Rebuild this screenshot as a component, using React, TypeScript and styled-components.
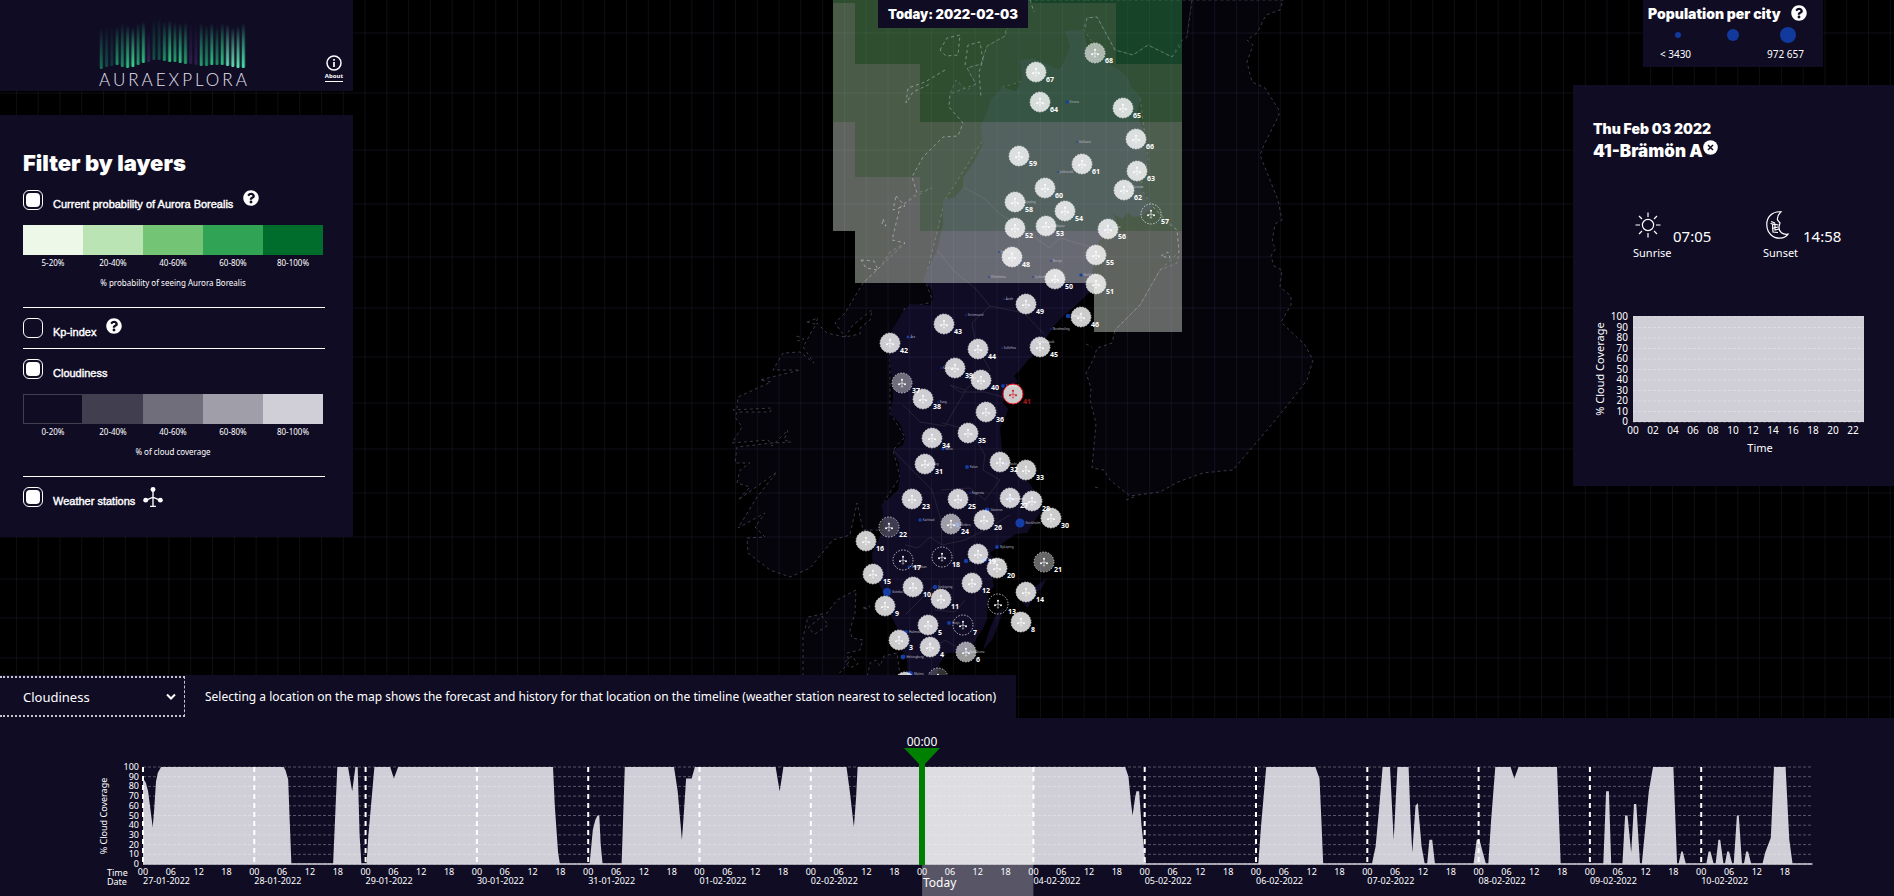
import React from "react";
import styled, { createGlobalStyle } from "styled-components";
import { FaQuestionCircle } from "react-icons/fa";

const NAVY = "#0f0c24";
const BODY = '"Noto Sans", "Open Sans", sans-serif';
const HEAVY = 'Inter, "Liberation Sans", sans-serif';

const GlobalStyle = createGlobalStyle`
  *, *::before { box-sizing: border-box; }
  body {
    margin: 0;
    background: #000;
    color: #fff;
    font-family: ${BODY};
    font-size: 12px;
  }
  h1, h2, p { margin: 0; }
`;

/* ---------- page structure ---------- */

const Page = styled.div`
  position: relative;
  display: flex;
  flex-direction: column;
  min-height: 100vh;
  overflow: hidden;
`;

const MapLayer = styled.svg`
  position: absolute;
  inset: 0;
  width: 100%;
  height: 100%;
`;

const Top = styled.div`
  position: relative;
  flex: 1;
  display: grid;
  grid-template-columns: 353px 1fr 321px;
  align-items: start;
  padding-bottom: 24px;
`;

const LeftColumn = styled.div`
  display: flex;
  flex-direction: column;
  gap: 24px;
`;

const MiddleColumn = styled.div`
  display: flex;
  justify-content: center;
  padding-right: 20px;
`;

const RightColumn = styled.div`
  display: flex;
  flex-direction: column;
  gap: 18px;
`;

const TodayBox = styled.h1`
  padding: 0 10px;
  background: ${NAVY};
  font: 900 13px/28px ${HEAVY};
  white-space: nowrap;
`;

/* ---------- header ---------- */

const Header = styled.header`
  display: grid;
  grid-template-columns: 1fr auto;
  align-items: end;
  height: 91px;
  padding: 0 10px 0 99px;
  background: ${NAVY};
`;

const Brand = styled.div`
  display: flex;
  flex-direction: column;
  align-items: flex-start;
  padding-bottom: 2px;
`;

const BrandName = styled.span`
  font: 300 17px/18px Lato, sans-serif;
  letter-spacing: 3px;
  color: #e4e2ee;
`;

const AboutLink = styled.a`
  display: flex;
  flex-direction: column;
  align-items: center;
  margin-bottom: 9px;
  color: #fff;
  font-size: 6px;
  font-weight: 700;
  line-height: 10px;
  text-decoration: none;

  span { border-bottom: 1px solid #fff; }
`;

/* ---------- filter panel ---------- */

const FilterPanel = styled.section`
  padding: 32px 28px 20px 23px;
  background: ${NAVY};
`;

const FilterTitle = styled.h2`
  margin-bottom: 1px;
  font: 900 22px/32px ${HEAVY};
`;

const Layer = styled.div<{ $divided?: boolean }>`
  padding: 10px 0;
  border-top: ${(p) => (p.$divided ? "1px solid #fff" : "0")};
`;

const LayerRow = styled.div`
  display: flex;
  gap: 10px;
  height: 20px;
`;

const Check = styled.input`
  appearance: none;
  display: grid;
  place-items: center;
  width: 20px;
  height: 20px;
  margin: 0;
  border: 1px solid #fff;
  border-radius: 6px;

  &:checked::before {
    content: "";
    width: 14px;
    height: 14px;
    border-radius: 4px;
    background: #fff;
  }
`;

const LayerLabel = styled.label`
  align-self: flex-end;
  font: 11px/12px "Liberation Sans", Arial, sans-serif;
  -webkit-text-stroke: 0.4px #fff;
`;

const IconButton = styled.button`
  display: inline-flex;
  align-self: flex-start;
  padding: 0;
  border: 0;
  background: none;
  color: #fff;
  cursor: pointer;
`;

const StationMark = styled.svg`
  margin-left: -2px;
`;

const Legend = styled.ol`
  display: grid;
  grid-template-columns: repeat(5, 60px);
  margin: 15px 0 4px;
  padding: 0;
  list-style: none;
`;

const LegendItem = styled.li<{ $color: string; $outlined?: boolean }>`
  font-size: 8px;
  line-height: 16px;
  text-align: center;

  &::before {
    content: "";
    display: block;
    height: 30px;
    background: ${(p) => p.$color};
    border: ${(p) => (p.$outlined ? "1px solid #413e50" : "0")};
  }
`;

const LegendCaption = styled.p`
  width: 300px;
  margin-bottom: 6px;
  font-size: 8px;
  line-height: 16px;
  text-align: center;
`;

/* ---------- right-hand panels ---------- */

const PopulationPanel = styled.section`
  width: 180px;
  height: 67px;
  margin-left: 70px;
  padding: 5px;
  background: ${NAVY};
`;

const PopulationTitle = styled.div`
  display: flex;
  align-items: center;
  gap: 10px;

  h2 { font: 900 14px/18px ${HEAVY}; white-space: nowrap; }
`;

const PopulationScale = styled.div`
  display: grid;
  grid-template-columns: repeat(3, 55px);
  justify-items: center;
  align-items: center;
  font-size: 10px;
  line-height: 14px;
  white-space: nowrap;
`;

const Dot = styled.span<{ $size: number }>`
  width: ${(p) => p.$size}px;
  height: ${(p) => p.$size}px;
  border-radius: 50%;
  background: #113a9c;
`;

const DotRow = styled(PopulationScale)`
  height: 24px;
  margin-left: 2px;
`;

const StationPanel = styled.section`
  padding: 33px 0 19px;
  background: ${NAVY};
`;

const StationTitle = styled.div`
  display: flex;
  padding-left: 20px;
  font: 900 17px/22px ${HEAVY};
`;

const StationDate = styled.p`
  padding-left: 20px;
  font: 900 14px/22px ${HEAVY};
`;

const SunTimes = styled.div`
  display: grid;
  grid-template-columns: 130px 1fr;
  padding: 49px 0 46px 60px;
`;

const SunTime = styled.div`
  font-size: 11px;
  line-height: 16px;
`;

const SunTimeValue = styled.div`
  display: flex;
  align-items: flex-end;
  gap: 10px;
  font-size: 15px;
  line-height: 18px;

  svg { margin-bottom: 6px; }
`;

const FluidSvg = styled.svg`
  display: block;
  width: 100%;
  height: auto;
`;

/* ---------- bottom ---------- */

const Bottom = styled.div`
  position: relative;
`;

const InfoBar = styled.div`
  display: flex;
  align-items: center;
  width: fit-content;
  height: 43px;
  padding-right: 20px;
  background: ${NAVY};
`;

const SelectBox = styled.div`
  display: grid;
  grid-template-columns: 1fr 18px;
  align-items: center;
  width: 185px;
  height: 41px;
  margin-right: 20px;
  border-color: #c4c3cc;
  border-style: dotted dashed dotted none;
  border-width: 2px 1px 2px 0;

  svg { grid-area: 1 / 2; pointer-events: none; }
`;

const Select = styled.select`
  appearance: none;
  grid-area: 1 / 1 / 2 / 3;
  height: 37px;
  padding: 0 23px;
  border: 0;
  background: transparent;
  color: #fff;
  font: 13px/18px ${BODY};

  option { background: ${NAVY}; }
`;

const InfoText = styled.p`
  font-size: 12px;
  line-height: 18px;
`;

const Timeline = styled.section`
  background: ${NAVY};
`;

/* ---------- map data ---------- */

type Station = [id: number, x: number, y: number, cover?: number];

const STATIONS: Station[] = [
  [68, 1095, 53, 0.6], [67, 1036, 72], [64, 1040, 102], [65, 1123, 108], [66, 1136, 139],
  [59, 1019, 156], [61, 1082, 164], [63, 1137, 171], [62, 1124, 190], [60, 1045, 188],
  [58, 1015, 202], [54, 1065, 211], [52, 1015, 228], [53, 1046, 226], [57, 1151, 214, 0],
  [56, 1108, 229], [48, 1012, 257], [55, 1096, 255], [50, 1055, 279], [51, 1096, 284],
  [49, 1026, 304], [46, 1081, 317], [43, 944, 324], [42, 890, 343], [44, 978, 349],
  [45, 1040, 347], [39, 955, 368], [40, 981, 380], [41, 1013, 394], [37, 902, 383, 0.4],
  [38, 923, 399], [36, 986, 412], [35, 968, 433], [34, 932, 438], [31, 925, 464],
  [32, 1000, 462], [33, 1026, 470], [23, 912, 499], [25, 958, 499], [27, 1010, 498],
  [28, 1032, 501], [22, 889, 527, 0.2], [24, 951, 524, 0.6], [26, 984, 520], [30, 1051, 518],
  [16, 866, 541], [17, 903, 560, 0], [18, 942, 557, 0], [19, 978, 554], [20, 997, 568],
  [21, 1044, 562, 0.4], [15, 873, 574], [10, 913, 587], [12, 972, 583], [11, 941, 599],
  [13, 998, 604, 0], [14, 1026, 592], [9, 885, 606], [5, 928, 625], [7, 963, 625, 0],
  [8, 1021, 622], [3, 899, 640], [4, 930, 647], [6, 966, 652, 0.6], [1, 905, 682],
  [2, 938, 678, 0.2],
];

type City = [name: string, x: number, y: number, r: number];

const CITIES: City[] = [
  ["Kiruna", 1067, 102, 1.6], ["Gällivare", 1077, 142, 0.8], ["Jokkmokk", 1058, 172, 0.8],
  ["Arjeplog", 1022, 202, 0.8], ["Haparanda", 1126, 187, 0.8], ["Luleå", 1110, 227, 1.8],
  ["Arvidsjaur", 1049, 226, 0.8], ["Storuman", 999, 252, 0.8], ["Norsjö", 1051, 261, 0.8],
  ["Vilhelmina", 989, 277, 0.8], ["Lycksele", 1033, 277, 0.8], ["Skellefteå", 1081, 275, 1.6],
  ["Åsele", 1004, 299, 0.8], ["Strömsund", 966, 315, 0.8], ["Umeå", 1068, 316, 2.2],
  ["Nordmaling", 1051, 329, 0.8], ["Åre", 908, 337, 1.4], ["Sollefteå", 1002, 348, 0.8],
  ["Örnsköldsvik", 1034, 342, 1.2], ["Krokom", 941, 368, 0.8], ["Ånge", 967, 378, 0.8],
  ["Sundsvall", 1003, 386, 2], ["Sveg", 938, 402, 0.8], ["Mora", 943, 449, 1.4],
  ["Malung", 926, 464, 0.8], ["Falun", 967, 467, 2], ["Gävle", 1006, 464, 1.8],
  ["Fagersta", 970, 493, 0.8], ["Västerås", 987, 510, 2.4], ["Karlstad", 920, 520, 1.8],
  ["Örebro", 957, 525, 2.4], ["Uppsala", 1010, 499, 2.4], ["Stockholm", 1020, 523, 4.6],
  ["Nyköping", 997, 547, 2], ["Linköping", 966, 561, 2.2], ["Norrköping", 985, 560, 2],
  ["Trollhättan", 909, 567, 1.4], ["Jönköping", 935, 587, 2.2], ["Göteborg", 887, 592, 4],
  ["Växjö", 949, 623, 2], ["Halmstad", 906, 632, 2], ["Helsingborg", 903, 657, 2.4],
  ["Karlskrona", 967, 652, 1.4], ["Malmö", 910, 674, 3],
];

/* [x, y, width, height, colour] */
const AURORA: [number, number, number, number, string][] = [
  [833, 0, 196, 3, "#74c476"], [1029, 0, 87, 3, "#31a354"], [1116, 0, 66, 64, "#31a354"],
  [833, 3, 22, 61, "#bae4b3"], [855, 3, 261, 61, "#74c476"],
  [833, 64, 87, 58, "#bae4b3"], [920, 64, 262, 58, "#74c476"],
  [833, 122, 22, 55, "#edf8e9"], [855, 122, 327, 55, "#bae4b3"],
  [833, 177, 87, 54, "#edf8e9"], [920, 177, 262, 54, "#bae4b3"],
  [855, 231, 327, 52, "#edf8e9"], [1094, 283, 88, 49, "#edf8e9"],
];

const SWEDEN =
  "M1065 31L1083 29L1088 48L1107 63L1120 70L1127 77L1132 88L1141 97L1137 113L1143 130L1145 147L1148 160L1142 172L1140 187L1146 198L1153 207L1142 216L1133 217L1128 213L1122 219L1113 214L1117 222L1108 235L1100 240L1090 258L1094 266L1087 287L1090 292L1073 308L1062 317L1053 327L1047 337L1040 344L1037 352L1028 360L1020 370L1014 376L1018 382L1007 388L1005 396L1003 403L1008 409L1006 416L1000 427L1002 450L1004 460L1007 467L1019 472L1030 484L1037 495L1040 513L1034 522L1027 533L1016 534L1007 540L998 547L990 553L996 562L992 577L994 586L988 593L987 620L982 630L977 637L972 647L962 652L947 653L940 663L938 672L932 682L908 682L907 660L897 640L897 628L890 613L883 593L873 570L872 553L883 530L883 513L881 505L887 500L898 490L900 477L899 464L893 450L903 445L905 437L900 424L890 413L893 397L892 380L890 363L890 340L893 328L903 312L910 304L930 305L933 300L932 290L923 280L937 250L943 225L943 200L955 197L963 187L963 178L975 160L983 144L980 127L988 110L990 100L1003 87L1016 91L1022 80L1020 60L1033 58L1060 70L1070 47Z";
const NORWAY =
  "M1086 0L1010 0L1008 26L1005 36L987 46L981 64L967 68L976 84L967 90L956 80L950 94L949 107L963 123L958 136L943 137L923 157L912 177L917 193L932 188L916 196L900 207L892 240L905 243L890 252L880 267L863 283L845 313L835 323L845 337L853 325L872 310L870 320L860 328L860 334L845 337L827 333L817 323L812 331L803 347L814 363L800 352L783 353L773 370L800 370L760 380L771 382L738 397L737 408L733 410L772 408L770 412L737 412L735 417L742 427L732 443L768 440L772 446L788 430L784 440L791 442L772 443L737 447L735 463L750 463L740 470L737 483L750 487L738 500L777 472L757 497L738 528L765 513L755 527L765 537L747 538L748 553L770 570L790 577L810 568L833 540L850 535L857 503L863 530L885 530L885 500L900 477L893 450L905 437L890 413L890 340L905 308L933 302L925 280L945 200L985 137L1003 87L1060 70L1085 30L1087 18L1097 17L1115 50L1133 55L1148 45L1172 57L1187 37L1192 0Z";
const FINLAND =
  "M1192 0L1187 37L1180 42L1172 57L1148 45L1133 55L1115 50L1097 17L1087 18L1083 29L1107 63L1140 97L1148 160L1140 187L1153 207L1167 223L1177 230L1179 252L1177 263L1160 270L1140 305L1115 330L1112 343L1097 348L1094 358L1086 373L1091 388L1090 400L1096 423L1092 468L1104 470L1110 480L1121 489L1130 496L1160 492L1178 482L1203 473L1222 471L1233 470L1273 423L1290 402L1307 380L1313 360L1305 345L1281 322L1291 305L1291 296L1280 287L1282 270L1274 266L1271 256L1276 248L1272 243L1275 224L1282 220L1278 200L1260 155L1264 145L1279 115L1279 110L1265 88L1252 82L1247 62L1253 45L1247 40L1257 33L1266 15L1280 10L1283 0Z";
const DENMARK =
  "M803 682L803 637L808 617L827 613L837 600L856 590L855 613L850 630L852 638L863 640L860 650L847 653L849 662L838 675L836 682ZM866 682L870 663L876 660L880 666L884 656L897 653L901 682Z";
const ISLANDS =
  "M1023 603L1030 590L1047 578L1042 588L1035 594L1028 608ZM983 650L990 628L997 613L1003 608L1000 620L992 640Z";
const FJORDS =
  "M940 50L947 38L960 35L958 55L946 56ZM965 65L968 45L980 42L983 60L979 72L981 98M945 70L925 82L908 88L906 103L913 92L930 84M896 196L905 206L893 210ZM861 260L874 261L878 270L866 268ZM883 219L886 226L882 224ZM807 322L818 318L815 324ZM797 336L804 339L798 341ZM1161 256L1168 252L1170 258ZM1086 344L1092 347M1095 487L1101 489M1126 500L1134 497M1030 0L1034 12M863 608L870 606L868 609ZM808 628L822 616L828 625L815 634ZM845 662L852 656L858 664L850 668Z";
const COUNTIES =
  "M963 187L985 199L1000 214L1020 226L1049 248L1060 238L1094 248M937 250L955 272L975 288L990 306L972 323L976 345L990 370L965 390L950 385M990 306L1024 313L1045 335M950 385L960 392L985 392L1003 397M903 405L920 422L945 426L960 400L966 390M893 450L912 470L932 490L941 520L942 545M942 423L970 430L985 455L983 470L1000 480M941 490L970 488L985 500L1000 480M905 545L918 548L930 537L942 545L965 540L985 530L1010 515M940 580L935 610L955 612L965 600M905 615L920 600L935 585M925 655L945 640L962 650";

const LONGITUDES = Array.from({ length: 87 }, (_, i) => 16.4 + i * 21.79);
const LATITUDES = [33, 93, 150, 204, 257, 308, 357, 403, 449, 493, 537, 579, 618, 658, 697];

function StationGlyph({ color = "#fff" }: { color?: string }) {
  return (
    <g fill={color} stroke={color}>
      <path d="M0 -7V9M-3 9.500H3M-7 3L0 0L7 3" fill="none" strokeWidth="1.400" />
      <g stroke="none">
        <circle cy="-8" r="2.500" />
        <circle cx="-7.500" cy="3" r="2.500" />
        <circle cx="7.500" cy="3" r="2.500" />
      </g>
    </g>
  );
}

function WeatherMap() {
  return (
    <MapLayer viewBox="0 0 1894 896" preserveAspectRatio="xMidYMin slice" role="img" aria-label="Map of Sweden">
      <g fill="#05040b" stroke="#3a3846" strokeWidth="1" strokeDasharray="3 3">
        <path d={NORWAY} />
        <path d={FINLAND} />
        <path d={DENMARK} />
        <path d={FJORDS} fill="none" />
      </g>
      <path d={SWEDEN} fill="#100c25" />
      <path d={ISLANDS} fill="#100c25" />
      <path d={COUNTIES} fill="none" stroke="#252238" />
      <g stroke="#5a5a90" strokeOpacity="0.16">
        {LONGITUDES.map((x) => <path key={x} d={`M${x} 0V896`} />)}
        {LATITUDES.map((y) => <path key={y} d={`M0 ${y}H1894`} />)}
      </g>
      <g fillOpacity="0.4">
        {AURORA.map(([x, y, w, h, color]) => (
          <rect key={`${x}-${y}`} x={x} y={y} width={w} height={h} fill={color} shapeRendering="crispEdges" />
        ))}
      </g>
      <clipPath id="north"><rect x="833" y="0" width="349" height="332" /></clipPath>
      <g clipPath="url(#north)" fill="none" stroke="#fff" strokeOpacity="0.22" strokeDasharray="3 3">
        <path d="M1010 0L1005 36L987 46L981 64L967 68L976 84L950 94L949 107L963 123L958 136L943 137L923 157L912 177L917 193L900 207L892 240L905 243L880 267L863 283" />
        <path d={FJORDS} />
        <path d="M1192 0L1187 37L1172 57L1148 45L1133 55L1115 50L1097 17L1087 18L1085 30M1153 207L1177 230L1179 252L1160 270L1140 305L1115 330" />
      </g>
      {CITIES.map(([name, x, y, r]) => (
        <g key={name}>
          <circle cx={x} cy={y} r={r} fill="#143da6" />
          <text x={x + r + 1} y={y + 1} fontSize="3" fill="#b9b8c6">{name}</text>
        </g>
      ))}
      {STATIONS.map(([id, x, y, cover = 0.8]) => {
        const active = id === 41;
        return (
          <g key={id} transform={`translate(${x} ${y})`}>
            <circle
              r="10"
              fill={cover === 0 ? "none" : "#fff"}
              fillOpacity={cover}
              stroke={active ? "#f01820" : "#fff"}
              strokeOpacity={active ? 1 : 0.7}
              strokeDasharray={active ? undefined : "1.500 1.500"}
            />
            <g transform="scale(0.400)"><StationGlyph color={active ? "#d8141c" : "#fff"} /></g>
            <text x={id < 10 ? 12 : 14} y="10" fontSize="7" fontWeight="700" textAnchor="middle" fill={active ? "#b0161e" : "#fff"}>{id}</text>
          </g>
        );
      })}
    </MapLayer>
  );
}

/* ---------- timeline ---------- */

const COVERAGE: [hour: number, percent: number][] = [
  [0, 88], [0.6, 84], [1.1, 75], [2.1, 38], [2.4, 55], [2.8, 85], [3.2, 94], [3.9, 100],
  [30.3, 100], [30.7, 97], [31.3, 87], [31.6, 50], [32, 0], [41, 0], [41.9, 100], [44.2, 100],
  [45.1, 75], [45.8, 100], [46.3, 100], [46.7, 30], [47.1, 0], [48.2, 0], [48.6, 30], [49.9, 100],
  [53.3, 100], [54.1, 88], [55, 100], [88.4, 100], [88.8, 60], [89.5, 12], [89.9, 0], [96.3, 0],
  [97, 35], [97.5, 45], [98, 50], [98.4, 50], [98.7, 20], [99.1, 0], [103.2, 0], [103.9, 100],
  [114.5, 100], [115.3, 75], [116.2, 25], [116.6, 50], [117.1, 88], [118.3, 88], [119, 100],
  [136.4, 100], [137.3, 75], [138.1, 100], [151.7, 100], [152.4, 75], [153.3, 38], [153.8, 70],
  [154.1, 100], [211.8, 100], [212.5, 90], [213, 65], [213.4, 50], [213.9, 68], [214.2, 75],
  [214.8, 75], [215.3, 40], [216, 8], [216.3, 0], [240.5, 0], [241.1, 40], [242.2, 100],
  [252.8, 100], [253.7, 88], [254.1, 45], [254.5, 0], [265, 0], [265.8, 18], [266.5, 55],
  [267.3, 100], [268.9, 100], [269.7, 25], [270.5, 100], [272.9, 100], [273.3, 50], [273.7, 12],
  [274.4, 60], [274.9, 63], [275.7, 18], [276.4, 0], [276.9, 0], [277.4, 25], [278, 25],
  [278.6, 0], [286.9, 0], [287.6, 25], [288.2, 25], [288.9, 12], [289.6, 0], [290.1, 0],
  [290.7, 45], [291.6, 100], [294.9, 100], [295.7, 88], [296.6, 100], [304.9, 100], [305.7, 0],
  [314.9, 0], [315.5, 75], [316.1, 75], [316.6, 0], [319, 0], [319.6, 50], [320.1, 50],
  [320.9, 12], [321.5, 62], [322, 62], [322.8, 0], [323.2, 0], [324, 40], [324.7, 75],
  [325.6, 100], [330, 100], [330.8, 0], [331.1, 0], [331.7, 13], [332, 13], [332.7, 0],
  [337.1, 0], [337.6, 13], [338, 13], [338.7, 0], [339.1, 0], [339.7, 25], [340.1, 25],
  [340.8, 0], [341.1, 0], [341.6, 13], [342, 13], [342.7, 0], [343, 0], [343.7, 50], [344.1, 50],
  [344.8, 0], [345.2, 0], [345.7, 13], [346.1, 13], [346.8, 0], [349.2, 0], [349.8, 12],
  [351, 27], [351.7, 100], [354.2, 100], [355, 25], [355.7, 0], [360, 0],
];

const DATES = [
  "27-01-2022", "28-01-2022", "29-01-2022", "30-01-2022", "31-01-2022", "01-02-2022",
  "02-02-2022", "", "04-02-2022", "05-02-2022", "06-02-2022", "07-02-2022", "08-02-2022",
  "09-02-2022", "10-02-2022",
];
const PERCENTS = [0, 10, 20, 30, 40, 50, 60, 70, 80, 90, 100];

const LEFT = 143;
const DAY = 111.3;
const TOP = 49;
const BASE = 146;
const hourX = (hour: number) => LEFT + (hour / 24) * DAY;
const percentY = (percent: number) => BASE - (percent / 100) * (BASE - TOP);

function TimelineChart() {
  const line = COVERAGE.map(([h, p]) => `${hourX(h).toFixed(1)} ${percentY(p).toFixed(1)}`).join("L");
  return (
    <FluidSvg viewBox="0 0 1894 178" fontSize="9" fill="#fff" role="img" aria-label="Cloud coverage timeline">
      <path d={`M${LEFT} ${BASE}L${line}Z`} fill="#d0ced6" />
      <path d={`M${LEFT} ${BASE}H${hourX(360)}`} stroke="#d0ced6" strokeWidth="1.500" />
      {PERCENTS.map((p) => (
        <g key={p}>
          <path d={`M${LEFT} ${percentY(p)}H${hourX(360)}`} stroke="#fff" strokeOpacity="0.3" strokeDasharray="3 2" />
          <text x="139" y={percentY(p) + 3} textAnchor="end">{p}</text>
        </g>
      ))}
      <rect x={hourX(168)} y={TOP} width={DAY} height="129" fillOpacity="0.3" />
      {DATES.map((date, day) => (
        <g key={day}>
          <path d={`M${hourX(day * 24)} ${TOP}V${BASE}`} stroke="#fff" strokeWidth="2" strokeDasharray="5 4" />
          {["00", "06", "12", "18"].map((hour, i) => (
            <text key={hour} x={hourX(day * 24 + i * 6)} y="157" textAnchor="middle">{hour}</text>
          ))}
          <text x={hourX(day * 24)} y="166">{date}</text>
        </g>
      ))}
      <text x="107" y="158">Time</text>
      <text x="107" y="167">Date</text>
      <text transform="translate(107 98) rotate(-90)" textAnchor="middle">% Cloud Coverage</text>
      <path d="M904 30H940L925 46V147H919V46Z" fill="#008000" />
      <text x="922" y="28" fontSize="12" textAnchor="middle">00:00</text>
      <text x="923" y="169" fontSize="12">Today</text>
    </FluidSvg>
  );
}

function DayChart() {
  return (
    <FluidSvg viewBox="0 0 321 160" fontSize="10" fill="#fff" role="img" aria-label="Cloud coverage during the day">
      <rect x="60" y="9" width="231" height="106" fill="#d0ced6" />
      {PERCENTS.map((p) => (
        <g key={p}>
          <path d={`M60 ${115 - p * 1.05}H291`} stroke="#fff" strokeOpacity="0.3" strokeDasharray="3 2" />
          <text x="55" y={118 - p * 1.05} textAnchor="end">{p}</text>
        </g>
      ))}
      {Array.from({ length: 12 }, (_, i) => (
        <text key={i} x={60 + i * 20} y="127" textAnchor="middle">{String(i * 2).padStart(2, "0")}</text>
      ))}
      <text x="187" y="145" fontSize="11" textAnchor="middle">Time</text>
      <text transform="translate(31 62) rotate(-90)" fontSize="11" textAnchor="middle">% Cloud Coverage</text>
    </FluidSvg>
  );
}

/* ---------- small drawings ---------- */

/* [top, bottom, opacity, colour] of every light ray in the logo */
const RAYS: [number, number, number, string][] = [
  [14, 55, 0.7, "#1a8a63"], [12, 53, 0.5, "#177a66"], [11, 52, 0.4, "#17685e"], [12, 51, 0.9, "#1f9a6a"],
  [9, 53, 0.8, "#22a06e"], [11, 54, 1, "#2cbc7e"], [13, 53, 1, "#3ccf8f"], [9, 51, 0.9, "#26a873"],
  [7, 49, 1, "#2cbc7e"], [16, 48, 0.5, "#53307a"], [5, 46, 0.6, "#157058"], [3, 46, 0.6, "#157058"],
  [7, 47, 0.9, "#1f9a6a"], [6, 48, 1, "#2cbc7e"], [8, 48, 0.9, "#26a873"], [9, 49, 1, "#2cbc7e"],
  [8, 50, 0.9, "#26a873"], [10, 50, 0.4, "#53307a"], [12, 51, 0.4, "#53307a"], [9, 52, 0.9, "#26a873"],
  [11, 52, 0.9, "#1f9a6a"], [9, 51, 1, "#2cbc7e"], [12, 51, 0.8, "#22a06e"], [9, 51, 1, "#2cbc7e"],
  [10, 52, 1, "#63d6ac"], [13, 53, 1, "#63d6ac"], [12, 54, 1, "#5ce0b0"], [9, 54, 1, "#45e0a4"],
];

function AuroraLogo() {
  return (
    <svg width="148" height="57" viewBox="0 0 148 57" aria-hidden="true">
      {RAYS.map(([top, bottom, opacity, color], i) => (
        <React.Fragment key={i}>
          <linearGradient id={`ray${i}`} x1="0" y1="0" x2="0" y2="1">
            <stop offset="0" stopColor={color} stopOpacity="0" />
            <stop offset="1" stopColor={color} stopOpacity={opacity} />
          </linearGradient>
          <rect x={i * 5.26} y={top} width="4.600" height={bottom - top} rx="2" fill={`url(#ray${i})`} opacity="0.300" />
          <rect x={1 + i * 5.26} y={top} width="2.600" height={bottom - top} rx="1" fill={`url(#ray${i})`} />
        </React.Fragment>
      ))}
    </svg>
  );
}

function InfoIcon() {
  return (
    <svg width="16" height="16" viewBox="0 0 16 16" fill="none" stroke="#fff" aria-hidden="true">
      <circle cx="8" cy="8" r="7" strokeWidth="1.500" />
      <path d="M8 7V12M8 4V5.800" strokeWidth="1.700" />
    </svg>
  );
}

function CloseIcon() {
  return (
    <svg width="15" height="15" viewBox="0 0 15 15" aria-hidden="true">
      <circle cx="7.500" cy="7.500" r="7.300" fill="#fff" />
      <path d="M5 5L10 10M10 5L5 10" stroke={NAVY} strokeWidth="1.500" />
    </svg>
  );
}

function SunIcon() {
  return (
    <svg width="30" height="28" viewBox="0 0 30 28" fill="none" stroke="#fff" strokeWidth="1.200" aria-hidden="true">
      <circle cx="15" cy="14" r="5.600" />
      <path d="M15 1.500V6M15 22V26.500M2.500 14H7M23 14H27.500M6 5L9 8M21 20L24 23M24 5L21 8M9 20L6 23" />
    </svg>
  );
}

function MoonIcon() {
  return (
    <svg width="30" height="28" viewBox="0 0 30 28" fill="none" stroke="#fff" strokeWidth="1.200" aria-hidden="true">
      <path d="M18 0.800C9 0 3.500 6.500 3.800 14C4 22 10 27.500 17 27.200C20.500 27 23.500 25.500 25 23.200C20 24 15.500 21 16 15.500L17 12L14.500 9C14 6 15.500 3 18 0.800Z" />
      <path d="M8 10.500L12 12M7.500 12.500L15.500 14M9 17.500L15 16M9.500 13L10 21L15 21.500M12 12.500V19L16 18" />
    </svg>
  );
}

function HelpButton({ topic }: { topic: string }) {
  return (
    <IconButton type="button" aria-label={`Help: ${topic}`}>
      <FaQuestionCircle size={16} />
    </IconButton>
  );
}

const AURORA_LEGEND = [
  ["#edf8e9", "5-20%"], ["#bae4b3", "20-40%"], ["#74c476", "40-60%"], ["#31a354", "60-80%"], ["#006d2c", "80-100%"],
];
const CLOUD_LEGEND = [
  [NAVY, "0-20%"], ["#413e50", "20-40%"], ["#716e7c", "40-60%"], ["#a09ea8", "60-80%"], ["#d0ced6", "80-100%"],
];

function ColorLegend({ items, caption }: { items: string[][]; caption: string }) {
  return (
    <>
      <Legend>
        {items.map(([color, label]) => (
          <LegendItem key={label} $color={color} $outlined={color === NAVY}>{label}</LegendItem>
        ))}
      </Legend>
      <LegendCaption>{caption}</LegendCaption>
    </>
  );
}

export default function App() {
  return (
    <Page>
      <GlobalStyle />
      <WeatherMap />
      <Top>
        <LeftColumn>
          <Header>
            <Brand>
              <AuroraLogo />
              <BrandName>AURAEXPLORA</BrandName>
            </Brand>
            <AboutLink href="#about">
              <InfoIcon />
              <span>About</span>
            </AboutLink>
          </Header>
          <FilterPanel>
            <FilterTitle>Filter by layers</FilterTitle>
            <Layer>
              <LayerRow>
                <Check type="checkbox" id="aurora" defaultChecked />
                <LayerLabel htmlFor="aurora">Current probability of Aurora Borealis</LayerLabel>
                <HelpButton topic="aurora probability" />
              </LayerRow>
              <ColorLegend items={AURORA_LEGEND} caption="% probability of seeing Aurora Borealis" />
            </Layer>
            <Layer $divided>
              <LayerRow>
                <Check type="checkbox" id="kp" />
                <LayerLabel htmlFor="kp">Kp-index</LayerLabel>
                <HelpButton topic="Kp-index" />
              </LayerRow>
            </Layer>
            <Layer $divided>
              <LayerRow>
                <Check type="checkbox" id="clouds" defaultChecked />
                <LayerLabel htmlFor="clouds">Cloudiness</LayerLabel>
              </LayerRow>
              <ColorLegend items={CLOUD_LEGEND} caption="% of cloud coverage" />
            </Layer>
            <Layer $divided>
              <LayerRow>
                <Check type="checkbox" id="stations" defaultChecked />
                <LayerLabel htmlFor="stations">Weather stations</LayerLabel>
                <StationMark width="20" height="20" viewBox="-10 -10.500 20 20.500" aria-hidden="true">
                  <StationGlyph />
                </StationMark>
              </LayerRow>
            </Layer>
          </FilterPanel>
        </LeftColumn>

        <MiddleColumn>
          <TodayBox>Today: 2022-02-03</TodayBox>
        </MiddleColumn>

        <RightColumn>
          <PopulationPanel>
            <PopulationTitle>
              <h2>Population per city</h2>
              <HelpButton topic="population" />
            </PopulationTitle>
            <DotRow>
              <Dot $size={6} />
              <Dot $size={12} />
              <Dot $size={16} />
            </DotRow>
            <PopulationScale>
              <span>&lt; 3430</span>
              <span />
              <span>972 657</span>
            </PopulationScale>
          </PopulationPanel>
          <StationPanel>
            <StationDate>Thu Feb 03 2022</StationDate>
            <StationTitle>
              <span>41-Brämön A</span>
              <IconButton type="button" aria-label="Close station"><CloseIcon /></IconButton>
            </StationTitle>
            <SunTimes>
              <SunTime>
                <SunTimeValue><SunIcon />07:05</SunTimeValue>
                Sunrise
              </SunTime>
              <SunTime>
                <SunTimeValue><MoonIcon />14:58</SunTimeValue>
                Sunset
              </SunTime>
            </SunTimes>
            <DayChart />
          </StationPanel>
        </RightColumn>
      </Top>

      <Bottom>
        <InfoBar>
          <SelectBox>
            <Select aria-label="Timeline layer" defaultValue="Cloudiness">
              <option>Cloudiness</option>
            </Select>
            <svg width="10" height="8" viewBox="0 0 10 8" fill="none" stroke="#fff" strokeWidth="2" aria-hidden="true">
              <path d="M1 1.500L5 5.500L9 1.500" />
            </svg>
          </SelectBox>
          <InfoText>
            Selecting a location on the map shows the forecast and history for that location on the timeline (weather
            station nearest to selected location)
          </InfoText>
        </InfoBar>
        <Timeline>
          <TimelineChart />
        </Timeline>
      </Bottom>
    </Page>
  );
}
